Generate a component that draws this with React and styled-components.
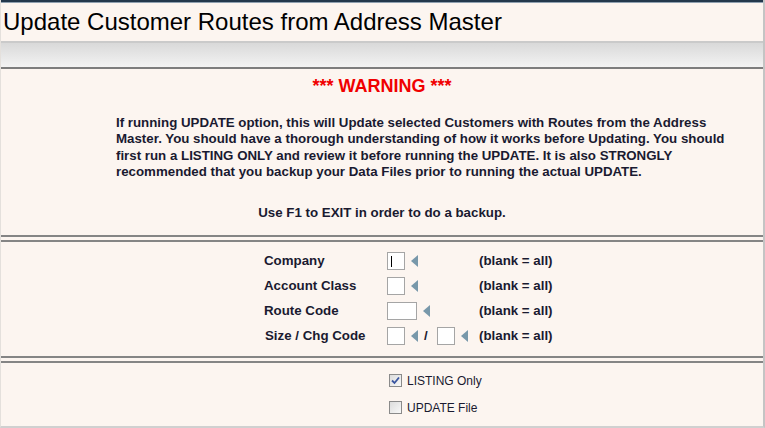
import React from 'react';
import styled, { createGlobalStyle } from 'styled-components';

const Global = createGlobalStyle`
  html, body { margin: 0; padding: 0; background: #fff; }
  body { font-family: "Liberation Sans", Arial, sans-serif; }
`;

const Page = styled.div`
  width: 765px;
  height: 428px;
  box-sizing: border-box;
  background: #fcf5f0;
  border-left: 1px solid #e4e0dc;
  border-right: 2px solid #c4c4c4;
  border-bottom: 2px solid #d0d0d0;
  display: flex;
  flex-direction: column;
  overflow: hidden;
`;

const TopLine = styled.div`
  height: 2px;
  background: #23384c;
  border-bottom: 1px solid #8fa0b0;
`;

const Title = styled.h1`
  margin: 0;
  height: 38px;
  line-height: 38px;
  padding-left: 2px;
  font-size: 24px;
  font-weight: normal;
  color: #000;
`;

const Band = styled.div`
  height: 24px;
  border-top: 2px solid #cacaca;
  border-bottom: 2px solid #7d7d7d;
  background: linear-gradient(to bottom, #d9d9d9, #f3f3f3);
`;

const Warning = styled.section`
  padding: 7px 0 0;
  text-align: center;
  height: 166px;
  box-sizing: border-box;
`;

const WarnTitle = styled.div`
  color: #f00000;
  font-weight: bold;
  font-size: 18px;
  line-height: 20px;
`;

const Para = styled.p`
  margin: 19px 0 0 115px;
  width: 610px;
  text-align: left;
  font-weight: bold;
  font-size: 13.3px;
  line-height: 16.3px;
  color: #1a1a30;
`;

const Note = styled.p`
  margin: 25px 0 0;
  font-weight: bold;
  font-size: 13.3px;
  line-height: 16px;
  color: #1a1a30;
`;

const DoubleRule = styled.div`
  height: 3px;
  border-top: 2px solid #858585;
  border-bottom: 2px solid #858585;
`;

const Form = styled.div`
  display: grid;
  grid-template-columns: 123px 92px auto;
  grid-auto-rows: 25px;
  padding: 6px 0 0 263px;
  height: 114px;
  box-sizing: border-box;
  align-items: center;
  color: #1a1a30;
  font-weight: bold;
  font-size: 13.3px;
`;

const Label = styled.div`
  padding-left: ${p => p.$indent || 0}px;
`;

const Field = styled.div`
  display: flex;
  align-items: center;
`;

const Box = styled.div`
  width: ${p => p.$w || 18}px;
  height: 18px;
  box-sizing: border-box;
  border: 1px solid #a5a5a5;
  background: #fff;
  position: relative;
`;

const Caret = styled.span`
  position: absolute;
  left: 3px;
  top: 3px;
  width: 1px;
  height: 11px;
  background: #000;
`;

const Arrow = styled.span`
  width: 0;
  height: 0;
  margin-left: 6px;
  border-top: 6px solid transparent;
  border-bottom: 6px solid transparent;
  border-right: 7px solid #7898aa;
`;

const Slash = styled.span`
  margin: 0 9px 0 6px;
`;

const Checks = styled.div`
  padding: 11px 0 0 388px;
  display: flex;
  flex-direction: column;
  gap: 14px;
`;

const CheckRow = styled.label`
  display: flex;
  align-items: center;
  gap: 5px;
  font-size: 12px;
  color: #1a1a30;
  height: 13px;
`;

const CheckBox = styled.span`
  width: 13px;
  height: 13px;
  box-sizing: border-box;
  border: 1px solid #8a8a8a;
  background: linear-gradient(135deg, #dcdcdc, #f8f8f8);
  display: flex;
  align-items: center;
  justify-content: center;
`;

const Check = ({ on }) => (
  <CheckBox>
    {on && (
      <svg width="9" height="9" viewBox="0 0 9 9">
        <path d="M1 4.5 L3.5 7 L8 1.5" fill="none" stroke="#3a55a0" strokeWidth="1.8" />
      </svg>
    )}
  </CheckBox>
);

const rows = [
  { label: 'Company', w: 18, caret: true },
  { label: 'Account Class', w: 18 },
  { label: 'Route Code', w: 30 },
];

export default function App() {
  return (
    <Page>
      <Global />
      <TopLine />
      <Title>Update Customer Routes from Address Master</Title>
      <Band />
      <Warning>
        <WarnTitle>*** WARNING ***</WarnTitle>
        <Para>
          If running UPDATE option, this will Update selected Customers with Routes from the Address
          Master. You should have a thorough understanding of how it works before Updating. You should
          first run a LISTING ONLY and review it before running the UPDATE. It is also STRONGLY
          recommended that you backup your Data Files prior to running the actual UPDATE.
        </Para>
        <Note>Use F1 to EXIT in order to do a backup.</Note>
      </Warning>
      <DoubleRule />
      <Form>
        {rows.map(r => (
          <React.Fragment key={r.label}>
            <Label>{r.label}</Label>
            <Field>
              <Box $w={r.w}>{r.caret && <Caret />}</Box>
              <Arrow />
            </Field>
            <div>(blank = all)</div>
          </React.Fragment>
        ))}
        <Label $indent={1}>Size / Chg Code</Label>
        <Field>
          <Box />
          <Arrow />
          <Slash>/</Slash>
          <Box />
          <Arrow />
        </Field>
        <div>(blank = all)</div>
      </Form>
      <DoubleRule />
      <Checks>
        <CheckRow><Check on />LISTING Only</CheckRow>
        <CheckRow><Check />UPDATE File</CheckRow>
      </Checks>
    </Page>
  );
}
